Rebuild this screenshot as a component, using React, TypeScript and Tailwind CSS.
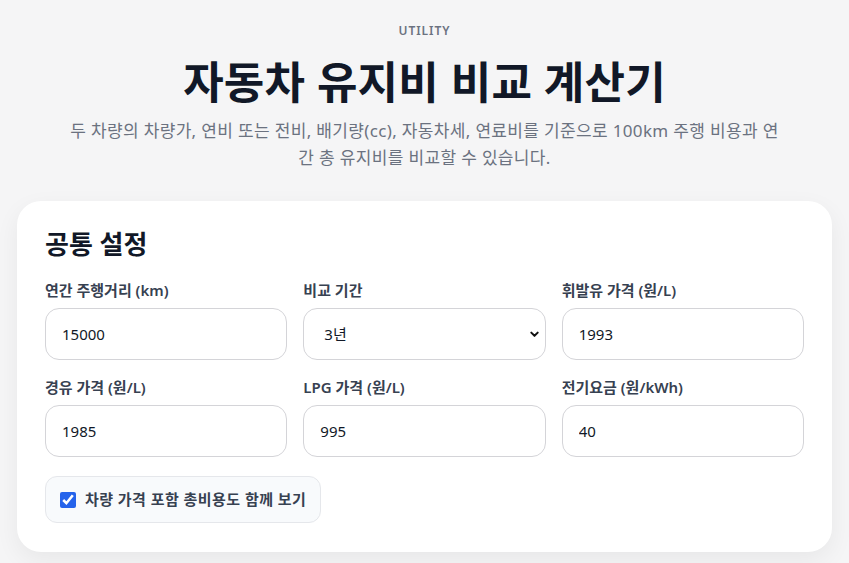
import { useState } from "react";

const font = {
  fontFamily: '"Noto Sans", "Noto Sans CJK KR", sans-serif',
};

const fields = [
  { id: "distance", label: "연간 주행거리 (km)", value: "15000" },
  { id: "period", label: "비교 기간", value: "3", select: true },
  { id: "gasoline", label: "휘발유 가격 (원/L)", value: "1993" },
  { id: "diesel", label: "경유 가격 (원/L)", value: "1985" },
  { id: "lpg", label: "LPG 가격 (원/L)", value: "995" },
  { id: "electric", label: "전기요금 (원/kWh)", value: "40" },
];

export default function App() {
  const [values, setValues] = useState<Record<string, string>>(
    Object.fromEntries(fields.map((f) => [f.id, f.value])),
  );
  const [includePrice, setIncludePrice] = useState(true);

  return (
    <div className="min-h-screen bg-[#f5f5f6] px-[17px] pb-[8px] pt-[22px]" style={font}>
      {/* 헤더 */}
      <div className="flex flex-col items-center text-center">
        <span className="text-[12px] font-semibold tracking-[0.08em] text-[#6b7280]">
          UTILITY
        </span>
        <h1 className="mt-[14px] text-[44px] font-bold leading-[56px] tracking-[0.005em] text-[#111827]">
          자동차 유지비 비교 계산기
        </h1>
        <p className="mt-[7px] max-w-[712px] text-[17px] leading-[27px] tracking-[0.02em] text-[#6b7280]">
          두 차량의 차량가, 연비 또는 전비, 배기량(cc), 자동차세, 연료비를 기준으로 100km 주행 비용과 연간 총 유지비를 비교할 수 있습니다.
        </p>
      </div>

      {/* 공통 설정 카드 */}
      <div className="mt-[30px] rounded-[24px] bg-white px-[28px] pb-[29px] pt-[26px] shadow-[0_8px_24px_rgba(0,0,0,0.06)]">
        <h2 className="text-[26px] font-bold leading-[34px] text-[#111827]">공통 설정</h2>

        <div className="mt-[20px] grid grid-cols-3 gap-x-4 gap-y-[18px]">
          {fields.map((f) => (
            <div key={f.id} className="flex flex-col">
              <label
                htmlFor={f.id}
                className="mb-[8px] text-[15px] font-semibold leading-[19px] text-[#374151]"
              >
                {f.label}
              </label>
              {f.select ? (
                <div className="relative">
                  <select
                    id={f.id}
                    value={values[f.id]}
                    onChange={(e) => setValues({ ...values, [f.id]: e.target.value })}
                    className="h-[52px] w-full appearance-none rounded-[14px] border border-[#d4d4d8] bg-white pl-[20px] pr-10 text-[15px] text-[#111827] outline-none"
                    style={font}
                  >
                    <option value="1">1년</option>
                    <option value="3">3년</option>
                    <option value="5">5년</option>
                  </select>
                  <svg
                    className="pointer-events-none absolute right-[6px] top-1/2 h-[11px] w-[11px] -translate-y-1/2"
                    viewBox="0 0 12 12"
                    fill="none"
                  >
                    <path
                      d="M2.5 4.5L6 8l3.5-3.5"
                      stroke="#111"
                      strokeWidth="2.2"
                      strokeLinecap="round"
                      strokeLinejoin="round"
                    />
                  </svg>
                </div>
              ) : (
                <input
                  id={f.id}
                  type="text"
                  value={values[f.id]}
                  onChange={(e) => setValues({ ...values, [f.id]: e.target.value })}
                  className="h-[52px] w-full rounded-[14px] border border-[#d4d4d8] bg-white px-[16px] text-[15px] text-[#111827] outline-none"
                  style={font}
                />
              )}
            </div>
          ))}
        </div>

        <label className="mt-[19px] inline-flex h-[47px] cursor-pointer items-center gap-[9px] rounded-[12px] border border-[#e5e7eb] bg-[#f8fafc] pl-[14px] pr-[14px]">
          <input
            type="checkbox"
            checked={includePrice}
            onChange={(e) => setIncludePrice(e.target.checked)}
            className="h-[16px] w-[16px] accent-[#2563eb]"
          />
          <span className="text-[15px] font-semibold tracking-[0.03em] text-[#374151]">
            차량 가격 포함 총비용도 함께 보기
          </span>
        </label>
      </div>
    </div>
  );
}
